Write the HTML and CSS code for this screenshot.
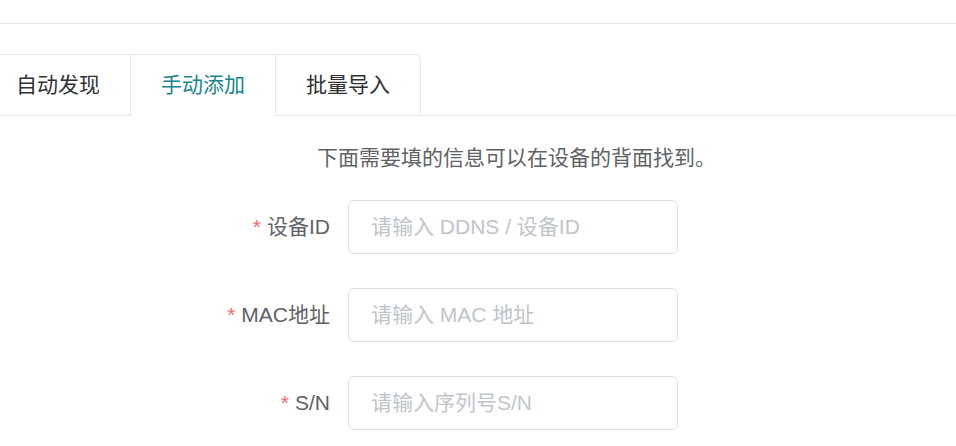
FILE: index.html
```html
<!DOCTYPE html>
<html lang="zh-CN">
<head>
<meta charset="utf-8">
<title>添加设备</title>
<link rel="stylesheet" href="styles.css">
</head>
<body>
<div class="topbar"></div>
<div class="tabs">
  <div class="tabs-header">
    <div class="tabs-nav">
      <div class="tab first">自动发现</div>
      <div class="tab active">手动添加</div>
      <div class="tab">批量导入</div>
    </div>
  </div>
  <div class="tab-body">
    <p class="desc">下面需要填的信息可以在设备的背面找到。</p>
    <form class="form">
      <label class="label"><span class="req">*</span>设备ID</label>
      <input class="input" type="text" placeholder="请输入 DDNS / 设备ID">
      <label class="label"><span class="req">*</span>MAC地址</label>
      <input class="input" type="text" placeholder="请输入 MAC 地址">
      <label class="label"><span class="req">*</span>S/N</label>
      <input class="input" type="text" placeholder="请输入序列号S/N">
    </form>
  </div>
</div>
</body>
</html>
```
FILE: styles.css
```css
html, body {
  margin: 0;
  padding: 0;
  background: #fff;
}
body {
  font-family: "Liberation Sans", "Noto Sans CJK SC", sans-serif;
  font-size: 21px;
  color: #606266;
  overflow: hidden;
}
.topbar {
  height: 23px;
  border-bottom: 1px solid #e4e7ed;
}
.tabs {
  margin-top: 30px;
}
.tabs-header {
  border-bottom: 1px solid #e4e7ed;
  display: flex;
}
.tabs-nav {
  display: flex;
  border-top-right-radius: 6px;
  margin-bottom: -1px;
}
.tab {
  height: 60px;
  line-height: 60px;
  padding: 0 30px;
  color: #303133;
  border-top: 1px solid #e4e7ed;
  border-right: 1px solid #e4e7ed;
  border-bottom: 1px solid transparent;
  white-space: nowrap;
}
.tab.first {
  padding-left: 16px;
}
.tab:last-child {
  border-top-right-radius: 6px;
}
.tab.active {
  color: #17868a;
  border-bottom-color: #fff;
}
.tab-body {
  padding-top: 27px;
}
.desc {
  margin: 0;
  padding-left: 317px;
  line-height: 30px;
  color: #606266;
}
.form {
  margin-top: 27px;
  display: grid;
  grid-template-columns: 348px 330px;
  row-gap: 34px;
}
.label {
  text-align: right;
  padding-right: 18px;
  line-height: 54px;
  color: #606266;
}
.req {
  color: #f56c6c;
  margin-right: 6px;
}
.input {
  box-sizing: border-box;
  height: 54px;
  width: 330px;
  border: 1px solid #dcdfe6;
  border-radius: 6px;
  padding: 0 22px;
  font-family: "Liberation Sans", "Noto Sans CJK SC", sans-serif;
  font-size: 21px;
  color: #606266;
  outline: none;
  background: #fff;
}
.input::placeholder {
  color: #c0c4cc;
}
```
